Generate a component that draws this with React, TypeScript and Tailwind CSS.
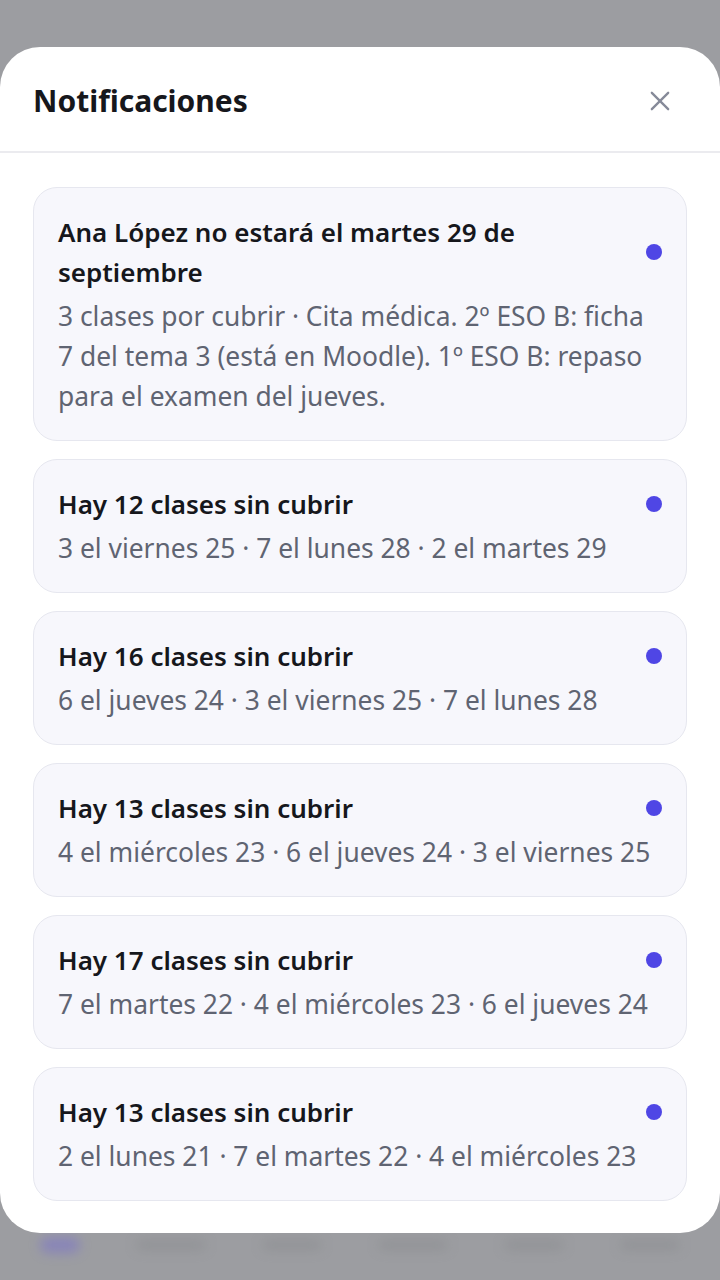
import React from "react";

type Notice = {
  title: string;
  body: string;
};

const notices: Notice[] = [
  {
    title: "Ana López no estará el martes 29 de septiembre",
    body: "3 clases por cubrir · Cita médica. 2º ESO B: ficha 7 del tema 3 (está en Moodle). 1º ESO B: repaso para el examen del jueves.",
  },
  { title: "Hay 12 clases sin cubrir", body: "3 el viernes 25 · 7 el lunes 28 · 2 el martes 29" },
  { title: "Hay 16 clases sin cubrir", body: "6 el jueves 24 · 3 el viernes 25 · 7 el lunes 28" },
  { title: "Hay 13 clases sin cubrir", body: "4 el miércoles 23 · 6 el jueves 24 · 3 el viernes 25" },
  { title: "Hay 17 clases sin cubrir", body: "7 el martes 22 · 4 el miércoles 23 · 6 el jueves 24" },
  { title: "Hay 13 clases sin cubrir", body: "2 el lunes 21 · 7 el martes 22 · 4 el miércoles 23" },
];

function NoticeCard({ title, body }: Notice) {
  return (
    <div className="flex flex-col gap-1 rounded-[24px] border border-[#e6e7ef] bg-[#f7f7fc] py-6 pl-6 pr-6">
      <div className="relative pr-[44px]">
        <p className="text-[26px] leading-[40px] font-semibold text-[#16171c]">{title}</p>
        {/* unread dot */}
        <span className="absolute right-0 top-1/2 h-4 w-4 -translate-y-1/2 rounded-full bg-[#4f46e5]" />
      </div>
      <p className="text-[26.4px] leading-[40px] text-[#5f6472]">{body}</p>
    </div>
  );
}

export default function App() {
  return (
    <div
      className="relative flex min-h-[1280px] flex-col overflow-hidden bg-[#9c9da1]"
      style={{ fontFamily: '"Noto Sans", "Open Sans", sans-serif' }}
    >
      <div className="h-[47px]" />
      <div className="relative z-10 flex flex-col rounded-[40px] bg-white">
        {/* Header */}
        <div className="flex h-[106px] items-center justify-between border-b-2 border-[#ebebef] pl-[33px] pr-[46px] pt-[3px]">
          <h2 className="text-[30px] font-bold text-[#16171c]">Notificaciones</h2>
          <button className="text-[#868a99]">
            <svg width="28" height="28" viewBox="0 0 24 24" fill="none" stroke="currentColor" strokeWidth="2" strokeLinecap="round">
              <path d="M5 5l14 14M19 5L5 19" />
            </svg>
          </button>
        </div>

        {/* List */}
        <div className="flex flex-col gap-[18px] px-[33px] pt-[34px] pb-[32px]">
          {notices.map((n, i) => (
            <NoticeCard key={i} {...n} />
          ))}
        </div>
      </div>

      {/* Blurred bottom bar behind the overlay */}
      <div className="-mt-[20px] flex items-center justify-between px-[40px] pt-[24px] opacity-60 blur-[6px]">
        <div className="h-[16px] w-[40px] rounded-full bg-[#7b74c9]" />
        <div className="h-[10px] w-[70px] rounded-full bg-[#8a8b8f]" />
        <div className="h-[10px] w-[60px] rounded-full bg-[#8a8b8f]" />
        <div className="h-[10px] w-[70px] rounded-full bg-[#8a8b8f]" />
        <div className="h-[10px] w-[60px] rounded-full bg-[#8a8b8f]" />
        <div className="h-[10px] w-[60px] rounded-full bg-[#8a8b8f]" />
      </div>
    </div>
  );
}
